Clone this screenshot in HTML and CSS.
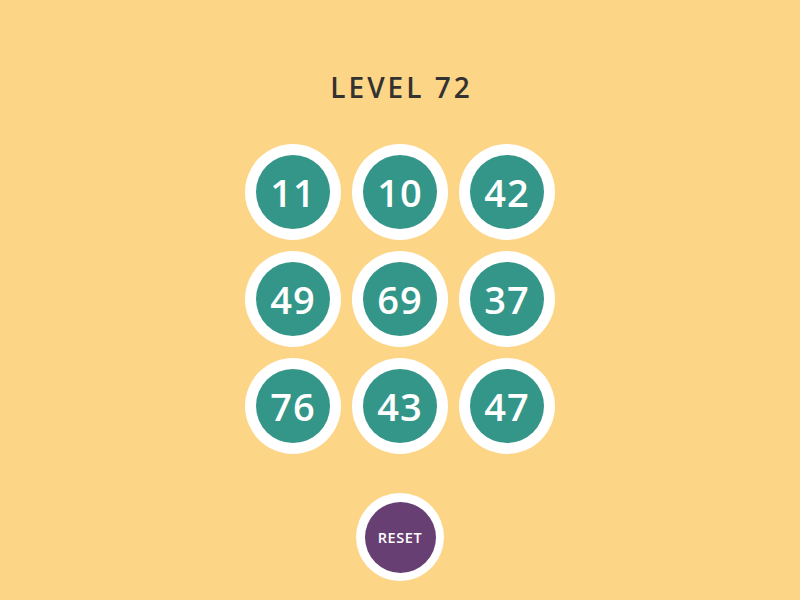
FILE: index.html
```html
<!DOCTYPE html>
<html>
<head>
<meta charset="utf-8">
<link rel="stylesheet" href="styles.css">
</head>
<body>
<main class="game">
  <h1 class="title">LEVEL 72</h1>
  <div class="grid">
    <button class="cell"><span>11</span></button>
    <button class="cell"><span>10</span></button>
    <button class="cell"><span>42</span></button>
    <button class="cell"><span>49</span></button>
    <button class="cell"><span>69</span></button>
    <button class="cell"><span>37</span></button>
    <button class="cell"><span>76</span></button>
    <button class="cell"><span>43</span></button>
    <button class="cell"><span>47</span></button>
  </div>
  <button class="reset"><span>RESET</span></button>
</main>
</body>
</html>
```
FILE: styles.css
```css
html, body {
  margin: 0;
  padding: 0;
  height: 100%;
}
body {
  background: #fdd587;
  font-family: "Open Sans", "DejaVu Sans", sans-serif;
}
.game {
  display: flex;
  flex-direction: column;
  align-items: center;
  padding-top: 70px;
}
.title {
  margin: 0;
  font-size: 28px;
  line-height: 34px;
  font-weight: 600;
  letter-spacing: 3px;
  padding-left: 3px;
  color: #333230;
}
.grid {
  margin-top: 40px;
  display: grid;
  grid-template-columns: repeat(3, 96px);
  grid-auto-rows: 96px;
  gap: 11px;
}
.cell, .reset {
  padding: 0;
  border: none;
  background: #ffffff;
  border-radius: 50%;
  display: flex;
  align-items: center;
  justify-content: center;
  font-family: inherit;
}
.cell {
  width: 96px;
  height: 96px;
}
.cell span {
  width: 74px;
  height: 74px;
  border-radius: 50%;
  background: #339688;
  color: #ffffff;
  display: flex;
  align-items: center;
  justify-content: center;
  font-size: 38px;
  font-weight: 600;
  letter-spacing: 1px;
}
.reset {
  margin-top: 39px;
  width: 88px;
  height: 88px;
}
.reset span {
  width: 71px;
  height: 71px;
  border-radius: 50%;
  background: #683f73;
  color: #ffffff;
  display: flex;
  align-items: center;
  justify-content: center;
  font-size: 14.5px;
  font-weight: 600;
  letter-spacing: 0.6px;
}
```
